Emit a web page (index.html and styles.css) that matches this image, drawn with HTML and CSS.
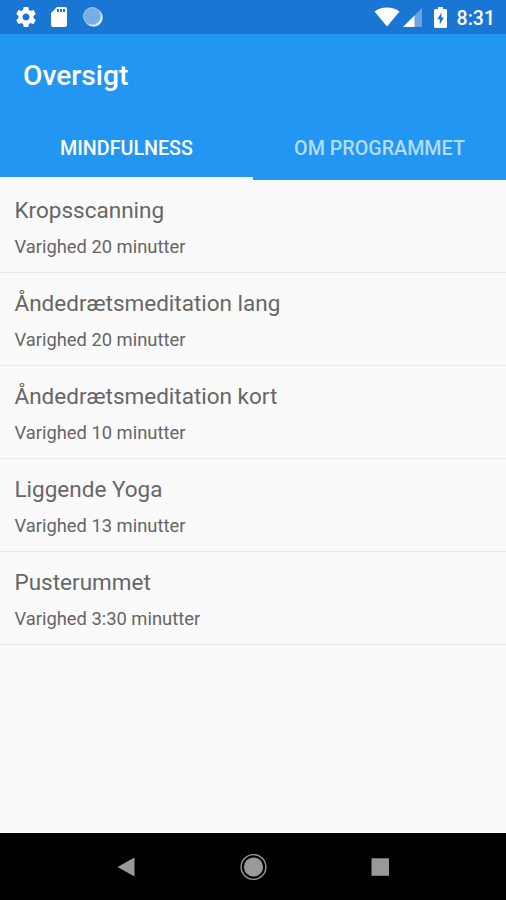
FILE: index.html
```html
<!DOCTYPE html>
<html lang="da">
<head>
    <meta charset="UTF-8">
    <meta name="viewport" content="width=device-width, initial-scale=1.0">
    <title>Oversigt</title>
    <link rel="stylesheet" href="styles.css">
</head>
<body>
    <div class="screen">
        <div class="status-bar">
            <div class="status-left">
                <svg width="24" height="24" viewBox="0 0 24 24"><path fill="#fff" d="M19.43 12.98c.04-.32.07-.64.07-.98s-.03-.66-.07-.98l2.11-1.65c.19-.15.24-.42.12-.64l-2-3.46c-.12-.22-.39-.3-.61-.22l-2.49 1c-.52-.4-1.08-.73-1.69-.98l-.38-2.65C14.46 2.18 14.25 2 14 2h-4c-.25 0-.46.18-.49.42l-.38 2.65c-.61.25-1.17.59-1.69.98l-2.49-1c-.23-.09-.49 0-.61.22l-2 3.46c-.13.22-.07.49.12.64l2.11 1.65c-.04.32-.07.65-.07.98s.03.66.07.98l-2.11 1.65c-.19.15-.24.42-.12.64l2 3.46c.12.22.39.3.61.22l2.49-1c.52.4 1.08.73 1.69.98l.38 2.65c.03.24.24.42.49.42h4c.25 0 .46-.18.49-.42l.38-2.65c.61-.25 1.17-.59 1.69-.98l2.49 1c.23.09.49 0 .61-.22l2-3.46c.12-.22.07-.49-.12-.64l-2.11-1.65zM12 15.5c-1.93 0-3.5-1.57-3.5-3.5s1.57-3.5 3.5-3.5 3.5 1.57 3.5 3.5-1.57 3.5-3.5 3.5z"/></svg>
                <svg class="icon-sd" width="24" height="24" viewBox="0 0 24 24"><path fill="#fff" d="M18 2h-8L4 8v12c0 1.100.9 2 2 2h12c1.100 0 2-.9 2-2V4c0-1.100-.9-2-2-2zm-6 5h-2V4h2v3zm3 0h-2V4h2v3zm3 0h-2V4h2v3z"/></svg>
                <svg class="icon-sync" width="22" height="22" viewBox="0 0 22 22"><circle cx="11.500" cy="11.500" r="9.300" fill="#e3f1fd"/><circle cx="10.200" cy="10.200" r="8.600" fill="#76aee6" stroke="#a4cbf0" stroke-width="1"/></svg>
            </div>
            <div class="status-right">
                <svg width="26" height="20" viewBox="0 0 26 20"><path fill="#fff" d="M13 19.500.5 4.500C4 1.800 8.300.5 13 .5s9 1.300 12.500 4z"/></svg>
                <svg class="icon-signal" width="19" height="19" viewBox="0 0 19 19"><path fill="#6ba6e2" d="M0 19 19 0v19z"/><path fill="#fff" d="M0 19 11.500 7.500V19z"/></svg>
                <svg class="icon-battery" width="13" height="21" viewBox="0 0 13 21"><path fill="#fff" d="M4 0h5v2h2.500c.8 0 1.500.7 1.500 1.500v16c0 .8-.7 1.500-1.500 1.500h-10C.7 21 0 20.300 0 19.500v-16C0 2.700.7 2 1.500 2H4z"/><path fill="#1976d2" d="M7.500 5.500 3.300 12.300h2.500v5.200l4-7H7.500z"/></svg>
                <span class="clock">8:31</span>
            </div>
        </div>

        <header class="app-bar">
            <h1>Oversigt</h1>
            <nav class="tabs">
                <a class="tab active">MINDFULNESS</a>
                <a class="tab">OM PROGRAMMET</a>
            </nav>
        </header>

        <ul class="list">
            <li>
                <h2>Kropsscanning</h2>
                <p>Varighed 20 minutter</p>
            </li>
            <li>
                <h2>Åndedrætsmeditation lang</h2>
                <p>Varighed 20 minutter</p>
            </li>
            <li>
                <h2>Åndedrætsmeditation kort</h2>
                <p>Varighed 10 minutter</p>
            </li>
            <li>
                <h2>Liggende Yoga</h2>
                <p>Varighed 13 minutter</p>
            </li>
            <li>
                <h2>Pusterummet</h2>
                <p>Varighed 3:30 minutter</p>
            </li>
        </ul>

        <div class="nav-bar">
            <svg width="28" height="28" viewBox="0 0 28 28"><path fill="#999" d="M5.500 14 22.500 4.500v19z"/></svg>
            <svg width="28" height="28" viewBox="0 0 28 28"><circle cx="14.500" cy="14" r="12.400" fill="none" stroke="#999" stroke-width="1.400"/><circle cx="14.500" cy="14" r="9.600" fill="#999"/></svg>
            <svg width="28" height="28" viewBox="0 0 28 28"><path fill="#999" d="M5.500 5.300H23v17.500H5.500z"/></svg>
        </div>
    </div>
</body>
</html>
```
FILE: styles.css
```css
* {
    box-sizing: border-box;
}
body {
    margin: 0;
    font-family: Roboto, sans-serif;
    background-color: #fafafa;
}
h1, h2, p, ul {
    margin: 0;
    padding: 0;
}
svg {
    display: block;
}
.screen {
    display: flex;
    flex-direction: column;
    height: 900px;
}
.status-bar {
    display: flex;
    justify-content: space-between;
    height: 34px;
    padding: 0 11px 0 14px;
    background-color: #1976d2;
}
.status-left, .status-right {
    display: flex;
    align-items: center;
}
.icon-sd {
    margin-left: 9px;
}
.icon-sync {
    margin-left: 11px;
}
.icon-signal {
    margin-left: 3px;
}
.icon-battery {
    margin-left: 12px;
}
.clock {
    margin-left: 10px;
    padding-top: 3px;
    font-size: 19.500px;
    font-weight: 500;
    line-height: 31px;
    color: #fff;
}
.app-bar {
    height: 146px;
    background-color: #2196f3;
}
.app-bar h1 {
    height: 79px;
    padding-left: 23px;
    font-size: 28.200px;
    font-weight: 500;
    line-height: 83px;
    color: #fff;
}
.tabs {
    display: flex;
    height: 67px;
}
.tab {
    flex: 1;
    border-bottom: 3px solid transparent;
    font-size: 19.700px;
    font-weight: 500;
    line-height: 71px;
    text-align: center;
    color: #b5dcfb;
}
.tab.active {
    border-bottom-color: #fafafa;
    color: #fff;
}
.list {
    flex: 1;
    list-style: none;
}
.list li {
    height: 93px;
    padding: 16px 14.500px 0;
    border-bottom: 1px solid #e8e8e8;
    color: #666;
}
.list h2 {
    font-size: 22.500px;
    font-weight: 400;
    line-height: 28px;
}
.list p {
    margin-top: 10.500px;
    font-size: 18.350px;
    line-height: 24px;
}
.nav-bar {
    display: flex;
    justify-content: center;
    align-items: center;
    gap: 99px;
    height: 67px;
    background-color: #000;
}
```
